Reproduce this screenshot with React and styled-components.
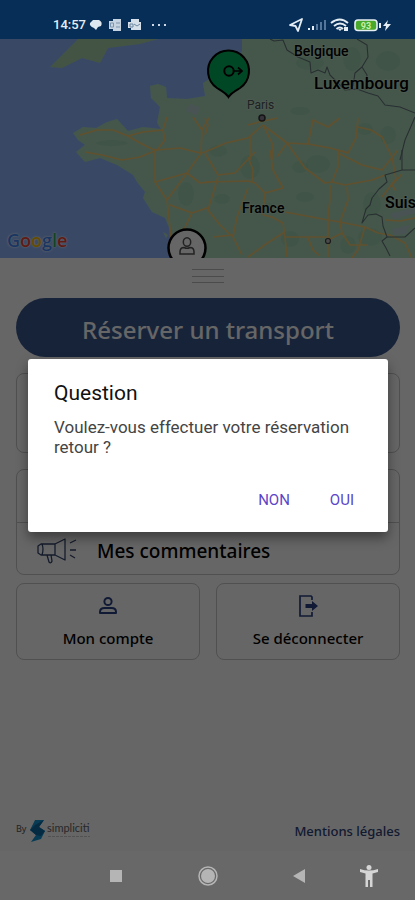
import React, { useState } from 'react';
import styled, { createGlobalStyle } from 'styled-components';

const roads = [
  'M80 96 97 91 113 91 128 97 140 104 152 110 157 111 180 109 200 114 205 113 226 104 248 99 263 86',
  'M128 97 143 93 163 91M167 78 163 91 165 101 157 111M193 78 202 91 201 114M209 79 202 91',
  'M85 113 102 116 122 121 140 118 157 111M155 111 155 143 167 161 170 189 172 219M155 143 187 134 202 113',
  'M187 134 167 161M187 134 200 144 212 143M170 166 192 174 210 168M192 174 185 188 178 195',
  'M263 86 273 106 272 121M250 98 250 121M263 86 287 104 308 105 330 109 348 114 356 99 358 79',
  'M308 105 313 81 328 88 340 79M358 88 371 91 382 98 392 118M287 104 277 118M248 86 263 82 278 79',
  'M205 114 218 136 235 134 255 113M205 143 248 142 255 144 265 154 263 176M248 118 253 131 252 143',
  'M218 138 208 171 220 186 233 198 242 216M233 198 237 178 248 149M265 154 283 149 273 131 270 111',
  'M287 104 305 129 325 144 332 143 345 146 372 141 385 136M332 143 338 128 338 111 348 114',
  'M338 114 362 126 382 131 398 111M330 146 330 160 328 178 328 218M347 148 348 161 340 183 342 194 328 201',
  'M285 198 328 198M283 184 285 198 287 218M283 194 266 205 248 218M285 173 328 181 340 183',
  'M263 176 272 178 283 184M340 183 365 188 358 211 352 219M308 199 313 211 320 217',
  'M365 188 378 194 390 196 405 204 412 219M385 181 400 182 415 179M392 118 396 140 382 158',
  'M205 79 208 86 205 96M342 194 350 206 368 206M402 135 392 146 396 152M213 198 233 196',
];

const borders = [
  'M270 0 274 2 283 1 287 11 298 18 310 23 311 34 318 31 325 34 327 28 330 36 345 51 357 50 368 54 378 57 385 66 400 68 415 74',
  'M357 0 367 6 368 18 362 28 355 34 353 47M362 28 367 36 365 51',
  'M415 78 405 101 400 121',
  'M402 111 402 131 392 134 385 136 387 143 379 150 372 159 370 166 366 170 362 184 368 176 376 175 382 178 383 187 387 198 382 202 386 209 390 217',
  'M402 131 415 131M387 198 405 198 415 189',
];

const forests = [
  [310, 24, 14, 7], [352, 20, 9, 12], [388, 22, 12, 10], [300, 72, 10, 4], [250, 128, 10, 12],
  [318, 125, 12, 9], [365, 90, 8, 6], [388, 96, 8, 9], [300, 128, 8, 6], [222, 160, 8, 5],
  [290, 200, 9, 8], [370, 198, 12, 9], [112, 104, 16, 3], [348, 206, 8, 9], [218, 112, 9, 6],
  [186, 155, 8, 12], [372, 165, 9, 12], [268, 168, 7, 4], [305, 158, 9, 5], [190, 196, 7, 5],
];

function FranceMap() {
  return (
    <MapSvg viewBox="0 0 415 219" preserveAspectRatio="xMidYMid slice" role="img" aria-label="Carte">
      <rect width="415" height="219" fill="#90b7fc" />
      <path d="M78 0 64 14 50 28 62 29 82 19 100 24 108 9 140 5 158 0Z" fill="#aad2ab" />
      <path
        d="M242 0V12L236 20 222 32 203 44 205 57 187 60 167 59 166 48 158 45 150 47 151 59 160 68 157 84 161 90 143 88 128 92 117 80 107 83 96 89 83 88 73 94 78 101 85 106 76 113 85 123 100 119 117 126 133 136 137 143 145 153 143 159 152 173 165 179 170 191 172 219H415V0Z"
        fill="#acdabb"
      />
      <path d="M163 193 168 196 166 199Z" fill="#acdabb" />
      {forests.map(([cx, cy, rx, ry]) => (
        <ellipse key={`${cx}-${cy}`} cx={cx} cy={cy} rx={rx} ry={ry} fill="#8fcba2" opacity=".4" />
      ))}
      <path d="M190 65 200 68 197 76 186 72ZM392 190 410 186 406 195 394 196ZM390 175 415 168 415 174 394 180Z" fill="#b8cfd2" />
      <g fill="none" stroke="#f3c873" strokeWidth="1.6" strokeLinejoin="round">
        {roads.map((d) => <path key={d} d={d} />)}
      </g>
      <g fill="none" stroke="#65757b" strokeWidth="1.1" strokeLinejoin="round">
        {borders.map((d) => <path key={d} d={d} />)}
      </g>
      <g fill="#000" stroke="#cfe6d6" strokeWidth="2" strokeOpacity=".5" paintOrder="stroke" fontFamily="Roboto, sans-serif" fontWeight="500">
        <text x="294" y="17" fontSize="14">Belgique</text>
        <text x="314" y="50" fontSize="17">Luxembourg</text>
        <text x="242" y="174" fontSize="14">France</text>
        <text x="385" y="169" fontSize="16">Suis</text>
        <text x="247" y="70" fontSize="12" fontWeight="400" fill="#4a5558">Paris</text>
      </g>
      <circle cx="262" cy="79" r="3" fill="#8a7f95" stroke="#333" strokeWidth="1.5" />
      <circle cx="328" cy="202" r="2.5" fill="#bbb" stroke="#444" strokeWidth="1.2" />
      <path
        d="M228.500 58C226 54 222 52 217 49A20.500 20.500 0 1 1 240 49C235 52 231 54 228.500 58Z"
        fill="#00b35c"
        stroke="#000"
        strokeWidth="2"
      />
      <g fill="none" stroke="#000" strokeWidth="2">
        <circle cx="229" cy="32" r="4.700" />
        <path d="M234 32H242M238 28.500 242 32 238 35.500" strokeWidth="1.700" />
      </g>
      <circle cx="187" cy="209" r="18.500" fill="#fff" stroke="#000" strokeWidth="2.500" />
      <g fill="none" stroke="#555" strokeWidth="1.500">
        <ellipse cx="187" cy="203" rx="3.700" ry="4.300" />
        <path d="M180 215V213Q180 208.500 184 208.500Q187 210 190 208.500Q194 208.500 194 213V215Z" />
      </g>
    </MapSvg>
  );
}

function StatusIcons() {
  return (
    <svg width="106" height="18" viewBox="0 0 106 18" aria-hidden="true">
      <path d="M3 9 15 3 11 15 8.500 10Z" fill="none" stroke="#e5edf4" strokeWidth="1.800" strokeLinejoin="round" />
      <path d="M21 14V12H23V14ZM25 14V10H27V14Z" fill="#e5edf4" />
      <path d="M29 14V8H31V14ZM33 14V6H35V14ZM37 14V4H39V14Z" fill="#54769a" />
      <g fill="none" stroke="#e5edf4" strokeWidth="2">
        <path d="M44 7Q53 0 61 7M47 10Q53 5 59 10M49.500 13Q53 10 56 13" />
      </g>
      <path d="M51 13 53 15 55 13ZM57 11H61V15H57Z" fill="#e5edf4" />
      <rect x="68" y="4" width="22" height="10.500" rx="3" fill="#49a92d" stroke="#e5edf4" strokeWidth="1.600" />
      <path d="M92 7H94V12H92Z" fill="#e5edf4" />
      <text x="79" y="12.500" fontSize="9" fontWeight="700" fill="#c5f0ae" textAnchor="middle" fontFamily="Roboto, sans-serif">93</text>
      <path d="M101 4 96 10H99L98 15 104 8H100Z" fill="#e5edf4" />
    </svg>
  );
}

function NotifIcons() {
  return (
    <svg width="80" height="18" viewBox="0 0 80 18" aria-hidden="true">
      <path d="M4 4H10Q14 6 12 10L9 11 7 14 5 12Q0 10 1 7Z" fill="#dfe8f1" />
      <path d="M20 5H24V3H32V15H24V13H20Z" fill="#c6d3e0" />
      <path d="M21.500 7H24.500V11H21.500ZM27 7H31M27 11H31" fill="none" stroke="#7d95ad" />
      <path d="M39 6H42V3H50V6H52V14H42V12H39Z" fill="#d5dfe9" />
      <path d="M41 8H44V11H41ZM45 8 48 10 51 8" fill="none" stroke="#6b86a1" />
      <path d="M63 8H65V10H63ZM69 8H71V10H69ZM75 8H77V10H75Z" fill="#cfdae6" />
    </svg>
  );
}

function Megaphone() {
  return (
    <svg width="40" height="30" viewBox="0 0 40 30" fill="none" stroke="#34466f" strokeWidth="1.300" strokeLinejoin="round" aria-hidden="true">
      <path d="M4 8H18V19H4L1 17V10ZM5 8Q7 13 5 19M18 8 28 3V24L18 19M10 19 12 26Q14 28 15 25L14 19M33 7 39 4M33 14H39M33 19 38 22" />
    </svg>
  );
}

function Account() {
  return (
    <svg width="20" height="22" viewBox="0 0 20 22" fill="none" stroke="#2b4386" strokeWidth="2" aria-hidden="true">
      <circle cx="10" cy="6.500" r="3.600" />
      <path d="M2 18V17Q2 13 6.500 13H13.500Q18 13 18 17V18Z" strokeLinejoin="round" />
    </svg>
  );
}

function Logout() {
  return (
    <svg width="20" height="22" viewBox="0 0 20 22" fill="none" stroke="#2b4386" strokeWidth="1.700" aria-hidden="true">
      <path d="M14 5V2L13 1H2V21H14V17" />
      <path d="M7.500 9H14V6L20 11 14 16V13H7.500Z" fill="#2b4386" stroke="none" />
    </svg>
  );
}

function Logo() {
  return (
    <svg width="76" height="24" viewBox="0 0 76 24" role="img" aria-label="By simpliciti">
      <text x="0" y="13" fontSize="9" fill="#555" fontFamily="Noto Sans, sans-serif">By</text>
      <path d="M19 1H28L23 8 29 12 25 20 15 23 20 16 14 11Z" fill="#1695d3" />
      <path d="M14 11 19 6 28 1 23 8 29 12 25 17 20 16Z" fill="#0b6ca5" />
      <text x="31" y="13" fontSize="11" fill="#666" fontFamily="Lato, sans-serif">simpliciti</text>
      <path d="M32 17.500H74" stroke="#ccc" strokeDasharray="3 1" />
    </svg>
  );
}

function App() {
  const [open, setOpen] = useState(true);

  return (
    <>
      <GlobalStyle />
      <Phone>
        <StatusBar>
          <Left>
            <time>14:57</time>
            <NotifIcons />
          </Left>
          <StatusIcons />
        </StatusBar>
        <Screen>
          <MapArea>
            <FranceMap />
            <Google>
              <Letter $color="#4285f4">G</Letter>
              <Letter $color="#ea4335">o</Letter>
              <Letter $color="#fbbc05">o</Letter>
              <Letter $color="#4285f4">g</Letter>
              <Letter $color="#34a853">l</Letter>
              <Letter $color="#ea4335">e</Letter>
            </Google>
          </MapArea>
          <Sheet>
            <Handle />
            <Primary type="button">Réserver un transport</Primary>
            <Card $height={80} />
            <Card>
              <Row as="div" />
              <Row type="button">
                <Megaphone />
                Mes commentaires
              </Row>
            </Card>
            <Tiles>
              <Tile type="button"><Account />Mon compte</Tile>
              <Tile type="button"><Logout />Se déconnecter</Tile>
            </Tiles>
            <Footer>
              <Logo />
              <a href="#mentions">Mentions légales</a>
            </Footer>
          </Sheet>
          {open && (
            <Scrim>
              <Dialog role="alertdialog" aria-modal="true" aria-labelledby="question">
                <h2 id="question">Question</h2>
                <p>Voulez-vous effectuer votre réservation retour ?</p>
                <Actions>
                  <Action type="button" onClick={() => setOpen(false)}>NON</Action>
                  <Action type="button" onClick={() => setOpen(false)}>OUI</Action>
                </Actions>
              </Dialog>
            </Scrim>
          )}
        </Screen>
        <NavBar>
          <NavButton type="button" aria-label="Applications récentes">
            <svg width="24" height="24" viewBox="0 0 24 24"><path d="M6 6H18V18H6Z" fill="#b5b5b5" /></svg>
          </NavButton>
          <NavButton type="button" aria-label="Accueil">
            <svg width="24" height="24" viewBox="0 0 24 24">
              <circle cx="12" cy="12" r="9" fill="none" stroke="#b5b5b5" strokeWidth="1.500" />
              <circle cx="12" cy="12" r="7" fill="#b5b5b5" />
            </svg>
          </NavButton>
          <NavButton type="button" aria-label="Retour">
            <svg width="24" height="24" viewBox="0 0 24 24"><path d="M6 12 18 5V19Z" fill="#b5b5b5" /></svg>
          </NavButton>
          <NavButton type="button" aria-label="Accessibilité">
            <svg width="24" height="24" viewBox="0 0 24 24" fill="#d5d5d5">
              <circle cx="12" cy="3.500" r="2.500" />
              <path d="M3 5Q12 8 21 5V8L15.500 9.500V23H13V16H11V23H8.500V9.500L3 8Z" />
            </svg>
          </NavButton>
        </NavBar>
      </Phone>
    </>
  );
}

export default App;

const GlobalStyle = createGlobalStyle`
* {
  box-sizing: border-box;
}
body {
  margin: 0;
}
button {
  font: inherit;
  color: inherit;
  background: none;
  border: none;
  padding: 0;
  cursor: pointer;
}
svg {
  display: block;
  flex-shrink: 0;
}
`;

const Phone = styled.div`
  display: flex;
  flex-direction: column;
  min-height: 100vh;
  font-family: "Noto Sans", sans-serif;
  color: #000;
`;

const StatusBar = styled.header`
  display: flex;
  justify-content: space-between;
  align-items: center;
  height: 39px;
  padding: 10px 22px 0 53px;
  background: #062e57;
  color: #e5edf4;
  font: 500 13px/18px Roboto, sans-serif;
`;

const Left = styled.div`
  display: flex;
  align-items: center;
  gap: 3px;
`;

const Screen = styled.main`
  position: relative;
  display: flex;
  flex-direction: column;
  flex: 1;
`;

const MapArea = styled.section`
  position: relative;
  height: 219px;
  overflow: hidden;
`;

const MapSvg = styled.svg`
  width: 100%;
  height: 100%;
`;

const Google = styled.div`
  position: absolute;
  left: 7px;
  bottom: 6px;
  font: 600 18px/24px "Open Sans", sans-serif;
  text-shadow: 0 0 1px #fff, 0 0 2px #fff;
`;

const Letter = styled.span`
  color: ${(props) => props.$color};
`;

const Sheet = styled.section`
  display: flex;
  flex-direction: column;
  flex: 1;
  padding: 11px 15px 8px 16px;
  background: #fff;
`;

const Handle = styled.div`
  align-self: center;
  width: 32px;
  height: 14px;
  border: solid #bbb;
  border-width: 1px 0;
  background: linear-gradient(#bbb, #bbb) center / 100% 1px no-repeat;
`;

const Primary = styled.button`
  height: 59px;
  margin-top: 15px;
  padding-top: 4px;
  border-radius: 30px;
  background: #3a588f;
  color: #fff;
  font-size: 24px;
  font-weight: 500;
`;

const Card = styled.div`
  height: ${(props) => (props.$height ? `${props.$height}px` : 'auto')};
  margin-top: 16px;
  border: 1px solid #c8c8c8;
  border-radius: 8px;
`;

const Row = styled.button`
  display: flex;
  align-items: center;
  gap: 20px;
  width: 100%;
  height: 52px;
  padding: 4px 0 0 20px;
  font-size: 19px;
  font-weight: 500;

  & + & {
    border-top: 1px solid #c8c8c8;
  }
`;

const Tiles = styled.div`
  display: grid;
  grid-template-columns: 1fr 1fr;
  gap: 16px;
  margin-top: 8px;
`;

const Tile = styled.button`
  display: flex;
  flex-direction: column;
  align-items: center;
  gap: 10px;
  height: 77px;
  padding-top: 11px;
  border: 1px solid #c8c8c8;
  border-radius: 8px;
  font-size: 15px;
  line-height: 22px;
  font-weight: 500;
`;

const Footer = styled.footer`
  display: flex;
  justify-content: space-between;
  align-items: center;
  margin-top: auto;

  a {
    color: #2f4179;
    font-size: 13px;
    font-weight: 500;
    text-decoration: none;
  }
`;

const Scrim = styled.div`
  position: absolute;
  inset: 0;
  display: flex;
  align-items: center;
  padding: 0 27px 0 28px;
  background: rgba(0, 0, 0, 0.6);
`;

const Dialog = styled.section`
  width: 100%;
  padding: 22px 26px 14px;
  border-radius: 3px;
  background: #fff;
  box-shadow: 0 6px 12px rgba(0, 0, 0, 0.4);
  font-family: Roboto, sans-serif;

  h2 {
    margin: 0;
    color: #111;
    font-size: 21px;
    line-height: 24px;
    font-weight: 400;
  }
  p {
    margin: 12px 0 0;
    color: #444;
    font-size: 17px;
    line-height: 20px;
  }
`;

const Actions = styled.div`
  display: flex;
  justify-content: flex-end;
  gap: 24px;
  margin-top: 25px;
`;

const Action = styled.button`
  padding: 0 8px;
  color: #5b45c9;
  font-size: 15px;
  line-height: 36px;
  font-weight: 400;
`;

const NavBar = styled.nav`
  display: grid;
  grid-template-columns: 92fr 92fr 90fr 50fr;
  align-items: center;
  height: 49px;
  padding: 0 21px 0 70px;
  background: #686868;
`;

const NavButton = styled.button`
  display: flex;
  justify-content: center;
`;
